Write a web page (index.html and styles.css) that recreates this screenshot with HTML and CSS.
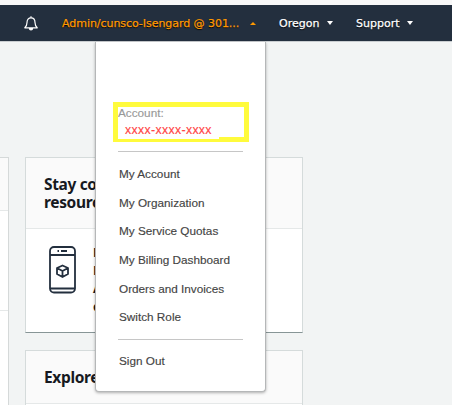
FILE: index.html
```html
<!DOCTYPE html>
<html lang="en">
<head>
<meta charset="utf-8">
<title>Console</title>
<link rel="stylesheet" href="styles.css">
</head>
<body>
<header class="nav">
  <svg class="bell" width="14" height="15" viewBox="0 0 14 15" fill="none" stroke="#fff" stroke-width="1.2"><path d="M.8 11.800C2.700 10.200 3 8.800 3 6.500C3 3.500 4.500 1.800 7 1.800s4 1.700 4 4.700c0 2.300.3 3.700 2.200 5.300z" stroke-linejoin="round"/><path d="M7 .2v1.600"/><path d="M5.500 12.500a1.500 1.500 0 0 0 3 0z" fill="#fff"/></svg>
  <div class="nav-item account"><span class="label">Admin/cunsco-Isengard @ 301...</span><i class="caret up"></i>
    <div class="menu">
      <div class="account-box"><div class="account-label">Account:</div><div class="account-id">xxxx-xxxx-xxxx</div></div>
      <ul class="links">
        <li>My Account</li><li>My Organization</li><li>My Service Quotas</li><li>My Billing Dashboard</li><li>Orders and Invoices</li><li>Switch Role</li>
      </ul>
      <div class="sign-out">Sign Out</div>
    </div>
  </div>
  <div class="nav-item region"><span class="label">Oregon</span><i class="caret"></i></div>
  <div class="nav-item support"><span class="label">Support</span><i class="caret"></i></div>
</header>
<main class="content">
  <section class="left-card"><div class="left-head"></div><div class="left-row"></div></section>
  <div class="column">
    <section class="card stay">
      <h2>Stay co<br>resourc</h2>
      <div class="card-body">
        <svg class="phone" width="28" height="48" viewBox="0 0 28 48" fill="none" stroke="#232f3e" stroke-width="1.800"><rect x="1" y="1" width="25" height="45.500" rx="4"/><path d="M1 9h25M1 42.500h25M8.500 5h1.500M12 5h6"/><path d="M13.500 19.500l5.500 2.500v6l-5.500 3-5.500-3v-6zM8 22l5.500 3 5.500-3M13.500 25v6" stroke-linejoin="round"/></svg>
        <p>D<br>M<br>A<br>d</p>
      </div>
    </section>
    <section class="card explore"><h2>Explore</h2></section>
  </div>
</main>
</body>
</html>
```
FILE: styles.css
```css
* { box-sizing: border-box; }
body {
  margin: 0;
  height: 405px;
  overflow: hidden;
  background: #f2f4f4;
  font-family: "Liberation Sans", Arial, sans-serif;
}
.nav {
  display: flex;
  align-items: center;
  height: 42px;
  padding-left: 24px;
  border-top: 5px solid #f7f7f7;
  border-bottom: 1px solid #c9cdd0;
  background: #232f3e;
  color: #fff;
  font: 11px/36px "DejaVu Sans", Verdana, sans-serif;
}
.bell { flex: none; margin-right: 24px; }
.nav-item {
  display: flex;
  align-items: center;
  flex: none;
  position: relative;
  height: 36px;
  text-shadow: 0 1px 1px #000;
  -webkit-text-stroke: .25px;
}
.label { padding-top: 2px; }
.account { width: 217px; color: #ff9900; }
.account .label { width: 188px; white-space: nowrap; letter-spacing: -.05px; }
.region { width: 77px; }
.region .label { width: 48px; }
.support .label { width: 51px; }
.caret {
  border: 3px solid transparent;
  border-top: 4px solid #fff;
  border-bottom: 0;
}
.caret.up { border-top: 0; border-bottom: 3px solid #ff9900; }
.menu {
  position: absolute;
  z-index: 2;
  top: 37px;
  left: 33px;
  width: 171px;
  height: 350px;
  padding: 60px 16px 0 17px;
  border: 1px solid #b5b7b8;
  border-top: 0;
  border-radius: 0 0 4px 4px;
  background: #fff;
  box-shadow: 0 1px 3px rgba(0, 0, 0, .3);
  color: #444;
  font: 11.75px/16px "Liberation Sans", Arial, sans-serif;
  text-shadow: none;
  -webkit-text-stroke: .15px;
}
.account-box {
  width: 136px;
  height: 40px;
  border: 5px solid #fffb3c;
  border-bottom-width: 3px;
  background: linear-gradient(#fffb3c, #fffb3c) right bottom / 25px 2px no-repeat;
}
.account-label { color: #999; line-height: 16px; margin-top: -2px; }
.account-id { color: #ff4545; padding-left: 7px; line-height: 19px; font-size: 12.300px; letter-spacing: .35px; }
.links {
  margin: 9px 0 0 5px;
  width: 125px;
  height: 189px;
  padding: 8px 0 0 1px;
  list-style: none;
  border: 1px solid #c6c6c6;
  border-width: 1px 0;
}
.links li { height: 28.700px; line-height: 28.700px; }
.sign-out { padding-left: 6px; line-height: 42px; }
.content { display: flex; align-items: flex-start; height: 363px; overflow: hidden; padding-top: 115px; }
.left-card {
  width: 9px;
  height: 248px;
  border: solid #d5d9d9;
  border-width: 1px 1px 0 0;
  background: #fff;
}
.left-head { height: 53px; background: #fafafa; border-bottom: 1px solid #e5e8e8; }
.left-row { height: 100px; border-bottom: 1px solid #e5e8e8; }
.column { width: 278px; margin-left: 16px; }
.card {
  border: 1px solid #d5dbdb;
  background: #fff;
  overflow: hidden;
}
.stay { height: 176px; border-bottom-color: #879596; }
.card h2 {
  margin: 0;
  height: 71px;
  padding: 17px 18px 0;
  border-bottom: 1px solid #e5e8e8;
  background: #fafafa;
  color: #16191f;
  font: bold 15.500px/18px "Noto Sans", sans-serif;
  letter-spacing: -.35px;
}
.card-body { display: flex; padding: 17px 23px; }
.phone { flex: none; }
.card-body p { margin: -3px 0 0 16px; color: #16191f; font: bold 13px/18px "Noto Sans", sans-serif; }
.explore { height: 55px; margin-top: 17px; border-bottom: 0; }
.explore h2 { height: 53px; }
```
